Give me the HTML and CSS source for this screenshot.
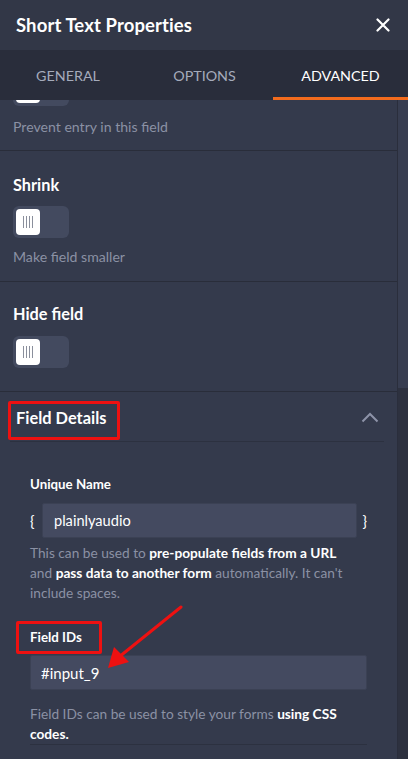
FILE: index.html
```html
<!DOCTYPE html>
<html>
<head>
<meta charset="utf-8">
<link rel="stylesheet" href="styles.css">
</head>
<body>
<div class="panel">
  <header class="header">
    <h1 class="title">Short Text Properties</h1>
    <svg class="close" width="14" height="14" viewBox="0 0 14 14"><path d="M1.5 1.5 L12.5 12.5 M12.5 1.5 L1.5 12.5" stroke="#fff" stroke-width="2.2" stroke-linecap="round"/></svg>
  </header>
  <nav class="tabs">
    <div class="tab">GENERAL</div>
    <div class="tab">OPTIONS</div>
    <div class="tab active">ADVANCED</div>
  </nav>
  <div class="body">
    <main class="main">
      <section class="sec sec-prevent">
        <div class="clip"><div class="toggle"><div class="knob"><span></span><span></span><span></span><span></span></div></div></div>
        <p class="hint">Prevent entry in this field</p>
      </section>
      <section class="sec sec-shrink">
        <div class="label">Shrink</div>
        <div class="toggle"><div class="knob"><span></span><span></span><span></span><span></span></div></div>
        <p class="hint">Make field smaller</p>
      </section>
      <section class="sec sec-hide">
        <div class="label">Hide field</div>
        <div class="toggle"><div class="knob"><span></span><span></span><span></span><span></span></div></div>
      </section>
      <section class="details">
        <div class="details-head">
          <div class="details-title">Field Details</div>
          <svg class="chev" width="18" height="11" viewBox="0 0 18 11"><path d="M1.5 9.5 L9 2 L16.5 9.5" fill="none" stroke="#8d93a8" stroke-width="2"/></svg>
        </div>
        <div class="details-body">
          <div class="small-label">Unique Name</div>
          <div class="name-row">
            <span class="brace">{</span>
            <div class="input name-input">plainlyaudio</div>
            <span class="brace">}</span>
          </div>
          <p class="desc desc-name">This can be used to <b>pre-populate fields from a URL</b> and <b>pass data to another form</b> automatically. It can't include spaces.</p>
          <div class="small-label ids-label">Field IDs</div>
          <div class="input id-input">#input_9</div>
          <p class="desc desc-ids">Field IDs can be used to style your forms <b>using CSS codes.</b></p>
        </div>
      </section>
    </main>
    <div class="scrollbar"><div class="thumb"></div></div>
  </div>

  <div class="mark mark-details"></div>
  <div class="mark mark-ids"></div>
  <svg class="arrow" width="90" height="70" viewBox="0 0 90 70">
    <path d="M88 2 L26 52" stroke="#ee1111" stroke-width="3" stroke-linecap="round"/>
    <path d="M15 63 L21 42 L36 57 Z" fill="#ee1111"/>
  </svg>
</div>
</body>
</html>
```

FILE: styles.css
```css
* { box-sizing: border-box; }
html, body { margin: 0; padding: 0; }
body {
  background: #343a4c;
  font-family: "Lato", "Noto Sans", sans-serif;
  color: #fff;
  width: 408px;
  height: 759px;
  overflow: hidden;
}
.panel { position: relative; width: 408px; height: 759px; }

.header {
  height: 50px;
  background: #323747;
  display: flex;
  align-items: center;
  justify-content: space-between;
  padding: 0 18px 0 16px;
}
.title {
  margin: 0;
  font-size: 18.5px;
  font-weight: 700;
  letter-spacing: 0.1px;
}
.close { display: block; }

.tabs {
  height: 50px;
  background: #292d3b;
  display: grid;
  grid-template-columns: 136px 137px 135px;
}
.tab {
  display: flex;
  align-items: center;
  justify-content: center;
  font-size: 14.3px;
  color: #a5abbb;
  padding-top: 4px;
  border-bottom: 3px solid transparent;
}
.tab.active { color: #fff; border-bottom-color: #f26b1d; }

.body { display: flex; height: 659px; }
.main { flex: 1; }
.scrollbar {
  width: 11px;
  border-left: 1px solid #2a2e3c;
  background: #2d313f;
}
.thumb { height: 288px; background: #373d50; }

.sec { padding: 0 13px; border-bottom: 1px solid #292d3a; }
.sec-prevent { padding-bottom: 14px; }
.sec-shrink { padding-top: 24px; padding-bottom: 15px; }
.sec-hide { padding-top: 22px; padding-bottom: 23px; }

.clip {
  height: 6px;
  overflow: hidden;
  display: flex;
  align-items: flex-end;
}
.hint {
  margin: 12px 0 0;
  font-size: 14.1px;
  line-height: 18px;
  color: #8b91a4;
}
.sec-shrink .hint { margin-top: 10px; }
.label {
  font-size: 16.3px;
  font-weight: 700;
  line-height: 20px;
  margin-bottom: 11px;
}
.sec-hide .label { margin-bottom: 12px; }

.toggle {
  width: 56px;
  height: 32px;
  border-radius: 6px;
  background: #434a5f;
  padding: 3px;
  flex-shrink: 0;
}
.knob {
  width: 24px;
  height: 26px;
  border-radius: 4px;
  background: #fff;
  display: flex;
  justify-content: center;
  align-items: center;
  gap: 2px;
}
.knob span { width: 1px; height: 12px; background: #8a8f9c; }

.details-head {
  height: 50px;
  margin: 0 13px 0 10px;
  padding-left: 6px;
  display: flex;
  align-items: center;
  justify-content: space-between;
  border-bottom: 1px solid #2c3140;
}
.details-title { font-size: 16.4px; font-weight: 700; padding-top: 2px; }
.chev { margin-right: 5px; margin-top: 2px; }

.details-body { padding: 34px 30px 0 30px; }
.small-label { font-size: 13.3px; font-weight: 700; line-height: 16px; }
.name-row {
  display: flex;
  align-items: center;
  margin-top: 11px;
}
.brace { font-size: 15px; color: #fff; width: 12px; }
.brace:last-child { text-align: right; width: 10px; }
.input {
  background: #444a60;
  border: 1px solid #3b4154;
  border-radius: 2px;
  height: 35px;
  display: flex;
  align-items: center;
  font-size: 14.6px;
  color: #fff;
}
.name-input { flex: 1; padding-left: 11px; }
.desc {
  margin: 5px 0 0;
  font-size: 13.7px;
  line-height: 20px;
  color: #8b91a4;
}
.desc-name { max-width: 331px; }
.desc b { color: #fff; font-weight: 700; }
.ids-label { margin-top: 26px; }
.id-input { margin-top: 10px; padding-left: 10px; width: 337px; font-size: 15px; }
.desc-ids {
  margin-top: 14px;
  padding-bottom: 0;
  border-bottom: 1px solid #2c3140;
}

.mark {
  position: absolute;
  border: 3px solid #ee1111;
  border-radius: 2px;
}
.mark-details { left: 8px; top: 401px; width: 112px; height: 39px; }
.mark-ids { left: 16px; top: 621px; width: 86px; height: 33px; }
.arrow { position: absolute; left: 93px; top: 605px; }
```
